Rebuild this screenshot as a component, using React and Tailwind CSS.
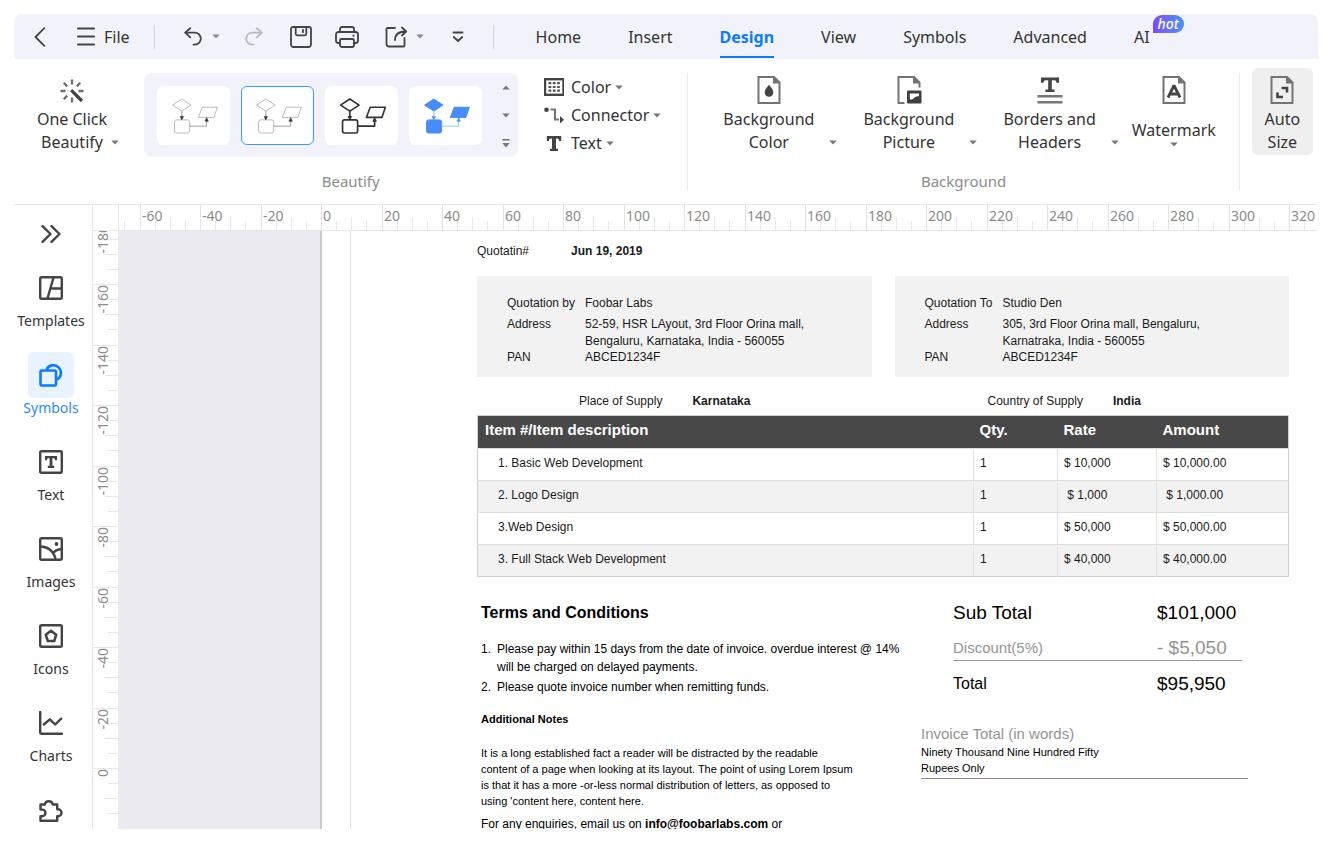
import React from "react";

const UI_FONT = "font-['Noto_Sans','Open_Sans',sans-serif]";
const DOC_FONT = "font-['Liberation_Sans',Arial,sans-serif]";

function Caret({ up = false, className = "fill-[#777777]" }) {
  return (
    <svg width="8" height="5" viewBox="0 0 8 5" className={"shrink-0 " + className} aria-hidden="true">
      <path d={up ? "M0.3 4.6h7.4L4 0.4z" : "M0.3 0.4h7.4L4 4.6z"} />
    </svg>
  );
}

/* ---------- top bar ---------- */

function TopIcon({ label, className = "", children }) {
  return (
    <button type="button" aria-label={label} className={"flex h-6 items-center justify-center " + className}>
      {children}
    </button>
  );
}

const stroke = { fill: "none", stroke: "#444444", strokeWidth: 1.8, strokeLinecap: "round", strokeLinejoin: "round" };

function UndoIcon({ color = "#444444", flip = false }) {
  return (
    <svg width="18" height="20" viewBox="0 0 18 20" {...stroke} stroke={color} aria-hidden="true">
      <g transform={flip ? "translate(18 0) scale(-1 1)" : undefined}>
        <path d="M6.2 1.2 1.2 5.600l5 4.800" />
        <path d="M1.6 5.600H10.800a6 6 0 0 1 0 12H9.500" />
      </g>
    </svg>
  );
}

const TABS = ["Home", "Insert", "Design", "View", "Symbols", "Advanced", "AI"];

function TopBar() {
  return (
    <header className="flex h-[45px] shrink-0 items-center rounded-t-lg bg-[#f2f3fa] text-[#333333]">
      <div className="flex items-center pl-5">
        <TopIcon label="Back" className="w-3">
          <svg width="12" height="20" viewBox="0 0 12 20" {...stroke} aria-hidden="true">
            <path d="M10.3 1.2 1.5 10l8.8 8.8" />
          </svg>
        </TopIcon>
        <button type="button" className="ml-[31px] flex items-center gap-[9px] text-base">
          <svg width="18" height="20" viewBox="0 0 18 20" {...stroke} aria-hidden="true">
            <path d="M.8 1.500h16.4M.8 9.500h16.4M.8 17.500h16.4" />
          </svg>
          File
        </button>
      </div>
      <div className="ml-6 h-6 w-px bg-[#d8d9df]" />
      <div className="ml-[29px] flex items-center">
        <TopIcon label="Undo" className="w-[18px]"><UndoIcon /></TopIcon>
        <TopIcon label="Undo history" className="ml-[10px] w-2"><Caret className="fill-[#8a8a8a]" /></TopIcon>
        <TopIcon label="Redo" className="ml-[25px] w-[18px]"><UndoIcon color="#b9b9bd" flip /></TopIcon>
        <TopIcon label="Save" className="ml-[27px] w-[22px]">
          <svg width="22" height="22" viewBox="0 0 22 22" {...stroke} aria-hidden="true">
            <path d="M3 1h16a2 2 0 0 1 2 2v15.5A2.5 2.5 0 0 1 18.500 21h-15A2.500 2.500 0 0 1 1 18.500V3a2 2 0 0 1 2-2z" />
            <path d="M5.700 1v6.800a1.500 1.500 0 0 0 1.500 1.500h7.600a1.500 1.500 0 0 0 1.500-1.500V1" />
            <path d="M13 3.800v2.400" />
          </svg>
        </TopIcon>
        <TopIcon label="Print" className="ml-[23px] w-6">
          <svg width="24" height="22" viewBox="0 0 24 22" {...stroke} aria-hidden="true">
            <path d="M5 6V3a2 2 0 0 1 2-2h10a2 2 0 0 1 2 2v3" />
            <path d="M5 17H3.500A2.500 2.500 0 0 1 1 14.500v-6A2.500 2.500 0 0 1 3.500 6h17A2.500 2.500 0 0 1 23 8.500v6a2.500 2.500 0 0 1-2.500 2.500H19" />
            <path d="M6.500 13h11a1.500 1.500 0 0 1 1.500 1.500v4.500a2 2 0 0 1-2 2H7a2 2 0 0 1-2-2v-4.500A1.500 1.500 0 0 1 6.500 13z" />
            <path d="M18.500 9.300v.6" />
          </svg>
        </TopIcon>
        <TopIcon label="Share" className="ml-[26px] w-[22px]">
          <svg width="22" height="22" viewBox="0 0 22 22" {...stroke} aria-hidden="true">
            <path d="M10 2H2.500a1 1 0 0 0-1 1V18A2.500 2.500 0 0 0 4 20.500h14.500a1 1 0 0 0 1-1V12" />
            <path d="M10 14C10 8.500 13 5.500 21 5.500M17 1.500l4.200 4L17 9.500" />
          </svg>
        </TopIcon>
        <TopIcon label="Share options" className="ml-[9px] w-2"><Caret className="fill-[#8a8a8a]" /></TopIcon>
        <TopIcon label="Customize toolbar" className="ml-7 w-3">
          <svg width="12" height="12" viewBox="0 0 12 12" {...stroke} aria-hidden="true">
            <path d="M1.500 1.500h9M1.800 6l4.200 4L10.200 6" />
          </svg>
        </TopIcon>
      </div>
      <div className="ml-[29px] h-6 w-px bg-[#d8d9df]" />
      <nav className="ml-[42px] flex h-full gap-[47px] text-base">
        {TABS.map((t) => {
          const active = t === "Design";
          return (
            <button
              key={t}
              type="button"
              className={
                "relative flex h-full items-center " +
                (active ? "font-bold text-[#0a7cff]" : "")
              }
            >
              {t}
              {active && <span className="absolute inset-x-0 bottom-px h-[2px] bg-[#0a7cff]" />}
              {t === "AI" && (
                <span className="absolute left-full top-px ml-[3px] rounded-[9px] rounded-bl-none bg-gradient-to-r from-[#7a48ff] to-[#4092f8] px-[5px] text-[14px] leading-[18px] font-medium text-white italic">
                  hot
                </span>
              )}
            </button>
          );
        })}
      </nav>
    </header>
  );
}

/* ---------- ribbon ---------- */

function FlowThumb({ color, shape = "none", arrow, line, width = 1 }) {
  return (
    <svg width="73" height="59" viewBox="0 0 73 59" fill={shape} stroke={color} strokeWidth={width} strokeLinejoin="round" aria-hidden="true">
      <path d="M24.500 12.500 34 18.800 24.500 25 15 18.800z" />
      <rect x="17" y="34" width="15.500" height="13.500" rx="2" />
      <path d="M45.500 21H61l-3.500 10.500H41.500z" />
      <path d="M24.500 25v7M32.500 40.500H50V33" fill="none" stroke={line} />
      <path d="M22.700 30.500h3.600l-1.800 3.600zM48.200 35.500h3.600L50 31.700z" fill={arrow} stroke={arrow} strokeWidth={width / 2} />
    </svg>
  );
}

const THUMBS = [
  { name: "Light style", color: "#b9b9b9", line: "#9a9a9a", arrow: "#333333" },
  { name: "Thin style", color: "#b9b9b9", line: "#9a9a9a", arrow: "#333333" },
  { name: "Bold style", color: "#333333", line: "#333333", arrow: "#333333", width: 1.7 },
  { name: "Filled style", color: "#478cf8", shape: "#478cf8", line: "#8ec4f5", arrow: "#478cf8" },
];

function PageOutline({ children, open = false }) {
  return (
    <svg width="26" height="28" viewBox="0 0 26 28" fill="none" stroke="#747474" strokeWidth="2" aria-hidden="true">
      {open ? (
        <path d="M8.500 27H2.500V1H18l5.500 5.500v5" />
      ) : (
        <path d="M2.500 1H18l5.500 5.500V27h-21z" />
      )}
      <path d="M17 0.500 24.500 7.500H17z" fill="#747474" stroke="none" />
      {children}
    </svg>
  );
}

function RibbonSplit({ icon, lines }) {
  return (
    <button type="button" className="flex flex-col items-center">
      {icon}
      <span className="mt-1 flex items-end">
        <span className="w-[23px]" />
        <span className="flex flex-col text-base leading-[23px]">
          <span>{lines[0]}</span>
          <span>{lines[1]}</span>
        </span>
        <span className="flex h-[23px] w-[23px] items-center justify-end"><Caret /></span>
      </span>
    </button>
  );
}

function GroupLabel({ children }) {
  return <div className="mt-3 text-center text-[15px] leading-6 text-[#8c8c8c]">{children}</div>;
}

function Divider() {
  return <div className="mt-[14px] h-[117px] w-px bg-[#ebebeb]" />;
}

function SmallMenu({ icon, label }) {
  return (
    <button type="button" className="flex h-7 items-center text-base">
      <span className="flex w-[20px] items-center justify-center">{icon}</span>
      <span className="ml-[7px]">{label}</span>
      <Caret className="ml-1 fill-[#777777]" />
    </button>
  );
}

function Ribbon() {
  return (
    <section className="flex h-[146px] shrink-0 overflow-hidden border-b border-[#e6e6ea] text-[#333333]">
      <div className="flex flex-col pt-[14px]">
        <div className="flex pr-6">
          <button type="button" className="flex w-[130px] flex-col items-center pr-[14px] pt-[6px]">
            <svg width="24" height="24" viewBox="0 0 24 24" fill="none" strokeLinecap="butt" aria-hidden="true">
              <path d="M12 .5v5M12 18.500v5M.5 12h5M18.500 12h5M3.800 3.800l3.400 3.600M20.200 3.800l-3.400 3.600M3.800 20.200l3.400-3.600" stroke="#707070" strokeWidth="2.400" />
              <path d="m11.200 11.200 10.800 10.800" stroke="#444444" strokeWidth="3.200" />
            </svg>
            <span className="mt-[5px] text-base leading-[23px]">One Click</span>
            <span className="flex items-center text-base leading-[23px]">
              <span className="w-4" />
              Beautify
              <span className="flex w-4 justify-end"><Caret /></span>
            </span>
          </button>
          <div className="flex h-[84px] items-center gap-[11px] rounded-lg bg-[#f2f3fa] pl-[13px]">
            {THUMBS.map((t, i) => (
              <button
                key={t.name}
                type="button"
                aria-label={t.name}
                className={
                  "flex h-[59px] w-[73px] items-center justify-center rounded-md border bg-white " +
                  (i === 1 ? "border-[#3d9bff]" : "border-white")
                }
              >
                <FlowThumb color={t.color} shape={t.shape} line={t.line} arrow={t.arrow} width={t.width} />
              </button>
            ))}
            <div className="flex h-full w-[25px] flex-col items-center">
              <button type="button" aria-label="Scroll up" className="flex h-7 items-center"><Caret up /></button>
              <button type="button" aria-label="Scroll down" className="flex h-7 items-center"><Caret /></button>
              <button type="button" aria-label="More styles" className="flex h-7 items-center">
                <svg width="8" height="9" viewBox="0 0 8 9" fill="#777777" aria-hidden="true">
                  <path d="M.3 0h7.400v1.500H.3zM.3 4h7.400L4 8.500z" />
                </svg>
              </button>
            </div>
          </div>
          <div className="ml-[26px] mr-[2px] flex flex-col items-start">
            <SmallMenu
              label="Color"
              icon={
                <svg width="20" height="18" viewBox="0 0 20 18" aria-hidden="true">
                  <rect x="1" y="1.200" width="18.500" height="15.600" fill="white" stroke="#444444" strokeWidth="2.400" />
                  <path d="M4.500 5.200h11.500M4.500 9h11.500M4.500 12.700h11.500" stroke="#555555" strokeWidth="2.200" strokeDasharray="2.800 1.500" />
                </svg>
              }
            />
            <SmallMenu
              label="Connector"
              icon={
                <svg width="20" height="17" viewBox="0 0 20 17" aria-hidden="true">
                  <circle cx="2.500" cy="2.800" r="2.300" fill="#444444" />
                  <path d="M6.500 2.500h4.500v10h4" fill="none" stroke="#777777" strokeWidth="2.200" />
                  <path d="m16 9 4 3.800L16 16.500z" fill="#444444" />
                </svg>
              }
            />
            <SmallMenu
              label="Text"
              icon={
                <svg width="16" height="15" viewBox="0 0 16 15" fill="#444444" aria-hidden="true">
                  <path d="M.8 0h14.400v5h-2.200c0-1.700-.6-2.400-2-2.400H10v10.200h2V15H4v-2.200h2V2.600H5C3.600 2.600 3 3.300 3 5H.8z" />
                </svg>
              }
            />
          </div>
        </div>
        <GroupLabel>Beautify</GroupLabel>
      </div>
      <Divider />
      <div className="flex flex-col pt-[14px]">
        <div className="flex h-[84px] items-start gap-[3px] pl-3 pr-[23px] pt-[3px]">
          <RibbonSplit
            lines={["Background", "Color"]}
            icon={
              <PageOutline>
                <path d="M13 8.800c2.600 3 4.300 5.300 4.300 7.700a4.300 4.300 0 0 1-8.600 0c0-2.400 1.700-4.700 4.300-7.700z" fill="#444444" stroke="none" />
              </PageOutline>
            }
          />
          <RibbonSplit
            lines={["Background", "Picture"]}
            icon={
              <PageOutline open>
                <rect x="11" y="14.500" width="14.500" height="13" rx="1" fill="#3f3f3f" stroke="none" />
                <path d="M13.800 17.500H23v2.800c-2.500 0-4 .5-5 1.800s-2.200 1.600-4.200 1.500z" fill="white" stroke="none" />
              </PageOutline>
            }
          />
          <RibbonSplit
            lines={["Borders and", "Headers"]}
            icon={
              <svg width="26" height="28" viewBox="0 0 26 28" aria-hidden="true">
                <path d="M4 1.500h18v5.300h-2.600c0-1.500-.6-2.500-1.800-2.500h-2.800v9.300h2.800V16H8.400v-2.400h2.800V4.300H8.400C7.200 4.300 6.600 5.300 6.600 6.800H4z" fill="#444444" />
                <path d="M.5 20.300h25M.5 26.300h25" stroke="#777777" strokeWidth="2.400" />
              </svg>
            }
          />
          <button type="button" className="ml-[10px] flex flex-col items-center text-base">
            <PageOutline>
              <path d="M7 21.500 13 9.500l6 12M9.500 18h7" stroke="#444444" strokeWidth="2.800" strokeLinejoin="bevel" />
            </PageOutline>
            <span className="mt-[15px] leading-[23px]">Watermark</span>
            <Caret />
          </button>
        </div>
        <GroupLabel>Background</GroupLabel>
      </div>
      <Divider />
      <div className="pl-3 pt-[9px]">
        <button type="button" className="flex h-[87px] w-[61px] flex-col items-center rounded-md bg-[#efefef] pt-2">
          <PageOutline>
            <path d="M12.500 12H18v4.500M8.500 16.500V21H14" stroke="#444444" strokeWidth="2.600" />
          </PageOutline>
          <span className="mt-1 text-base leading-[23px]">Auto</span>
          <span className="text-base leading-[23px]">Size</span>
        </button>
      </div>
    </section>
  );
}

/* ---------- sidebar ---------- */

const side = { width: 24, height: 24, viewBox: "0 0 24 24", fill: "none", stroke: "currentColor", strokeWidth: 2.4, strokeLinejoin: "round", "aria-hidden": true };

const SIDE_ITEMS = [
  {
    label: "Templates",
    icon: (
      <svg {...side}>
        <rect x="1.200" y="1.200" width="21.600" height="21.600" rx="1.500" />
        <path d="M14.500 1.500 8.500 22.500M12.500 12.500h10" />
      </svg>
    ),
  },
  {
    label: "Symbols",
    icon: (
      <svg {...side} strokeWidth="2.600">
        <rect x="1.500" y="7.500" width="15.500" height="15" rx="1.500" />
        <path d="M7.500 6.500A7.600 7.600 0 1 1 18 16.500" />
      </svg>
    ),
  },
  {
    label: "Text",
    icon: (
      <svg {...side}>
        <rect x="1.200" y="1.200" width="21.600" height="21.600" rx="1.500" />
        <path d="M6 6h12v4.200h-2c0-1.300-.4-1.900-1.400-1.900h-1.200v7.400h1.800V18H8.800v-2.300h1.800V8.300H9.400C8.400 8.300 8 8.900 8 10.200H6z" fill="currentColor" stroke="none" />
      </svg>
    ),
  },
  {
    label: "Images",
    icon: (
      <svg {...side}>
        <rect x="1.200" y="1.200" width="21.600" height="21.600" rx="1.500" />
        <path d="M1.500 9.500C8 9.500 14.500 13.500 16.500 22M13.500 17c2-3 5-4.700 9-4.700" />
        <circle cx="17.500" cy="7" r="1.900" fill="currentColor" stroke="none" />
      </svg>
    ),
  },
  {
    label: "Icons",
    icon: (
      <svg {...side}>
        <rect x="1.200" y="1.200" width="21.600" height="21.600" rx="1.500" />
        <path d="m12 6.800 5.200 4-2 6.200H8.800l-2-6.200z" strokeWidth="2.600" />
      </svg>
    ),
  },
  {
    label: "Charts",
    icon: (
      <svg {...side} strokeLinecap="round">
        <path d="M1.200 1v20.200a1.500 1.500 0 0 0 1.500 1.500H23" />
        <path d="m4.800 13.500 6-5.200 5.400 5.200 6-5.800" />
      </svg>
    ),
  },
  {
    name: "Plugins",
    icon: (
      <svg {...side}>
        <path d="M1.500 6.500h4.300a4.100 4.100 0 0 1 8 0h4.400v4.800h.8a3.500 3.500 0 0 1 0 7h-.8v4.500H1.500v-4.600h1.700a3.300 3.300 0 0 0 0-6.600H1.500z" />
      </svg>
    ),
  },
];

function Sidebar() {
  return (
    <aside className="flex w-[79px] shrink-0 flex-col items-center overflow-hidden border-r border-[#e6e6ea] pr-1 text-[#444444]">
      <button type="button" aria-label="Expand panel" className="mt-5 flex h-[18px] items-center">
        <svg width="20" height="18" viewBox="0 0 20 18" fill="none" stroke="#444444" strokeWidth="2.400" strokeLinecap="round" strokeLinejoin="round" aria-hidden="true">
          <path d="m1.500 1.200 8 7.800-8 7.800M10.500 1.200l8 7.800-8 7.800" />
        </svg>
      </button>
      <div className="mt-[22px] flex flex-col items-center gap-[21px]">
        {SIDE_ITEMS.map((it) => {
          const active = it.label === "Symbols";
          return (
            <button key={it.label || it.name} type="button" aria-label={it.name} className="flex flex-col items-center">
              <span className={"flex size-[46px] items-center justify-center rounded-md " + (active ? "bg-[#e9f3ff] text-[#0a7cff]" : "")}>
                {it.icon}
              </span>
              {it.label && (
                <span className={"text-sm leading-5 " + (active ? "text-[#2a8cff]" : "text-[#333333]")}>{it.label}</span>
              )}
            </button>
          );
        })}
      </div>
    </aside>
  );
}

/* ---------- rulers ---------- */

const STEP = 60.5;
const range = (from, to) => Array.from({ length: to - from + 1 }, (_, i) => from + i);

function HorizontalRuler() {
  const zero = 228;
  return (
    <svg className="block h-[26px] w-full border-b border-[#e6e6ea]" aria-hidden="true">
      <path d="M25.500 0v26" stroke="#e6e6ea" />
      {range(-13, 80).map((i) => {
        const x = Math.round(zero + (i * STEP) / 4) + 0.5;
        const major = i % 4 === 0;
        return <path key={i} d={`M${x} ${major ? 0 : i % 2 === 0 ? 12 : 16}V26`} stroke={major ? "#e2e2e8" : "#e6e6ea"} />;
      })}
      {range(-3, 16).map((i) => (
        <text key={i} x={Math.round(zero + i * STEP) + 2} y="16" fontSize="14" fill="#8c8c8c">
          {i * 20}
        </text>
      ))}
    </svg>
  );
}

function VerticalRuler() {
  const zero = 537;
  return (
    <svg className="block w-[25px] shrink-0 self-stretch" aria-hidden="true">
      {range(-36, 12).map((i) => {
        const y = Math.round(zero + (i * STEP) / 4) + 0.5;
        const x = i % 4 === 0 ? 0 : i % 2 === 0 ? 12 : 15;
        return <path key={i} d={`M${x} ${y}H25`} stroke="#e4e4ea" />;
      })}
      {range(-9, 0).map((i) => (
        <text key={i} transform={`translate(15 ${Math.round(zero + i * STEP) + 1}) rotate(-90)`} textAnchor="end" fontSize="14" fill="#8c8c8c">
          {i * 20}
        </text>
      ))}
    </svg>
  );
}

/* ---------- document ---------- */

function Party({ rows }) {
  return (
    <div className="bg-[#f2f2f2] pt-[19px] pr-4 pb-[13px] pl-[30px]">
      <dl className="grid grid-cols-[78px_1fr] whitespace-nowrap">
        <dt className="leading-4">{rows[0][0]}</dt>
        <dd className="leading-4">{rows[0][1]}</dd>
        <dt className="mt-[5px] leading-[17px]">{rows[1][0]}</dt>
        <dd className="mt-[5px] leading-[17px]">{rows[1][1]}<br />{rows[1][2]}</dd>
        <dt className="leading-[14px]">{rows[2][0]}</dt>
        <dd className="leading-[14px]">{rows[2][1]}</dd>
      </dl>
    </div>
  );
}

const ITEMS = [
  ["1. Basic Web Development", "1", "$ 10,000", "$ 10,000.00"],
  ["2. Logo Design", "1", " $ 1,000", " $ 1,000.00"],
  ["3.Web Design", "1", "$ 50,000", "$ 50,000.00"],
  ["3. Full Stack Web Development", "1", "$ 40,000", "$ 40,000.00"],
];

function ItemTable() {
  return (
    <table className="mt-[6px] w-full table-fixed border-collapse border border-[#cfcfcf] text-left">
      <colgroup>
        <col />
        <col className="w-[84px]" />
        <col className="w-[99px]" />
        <col className="w-[132px]" />
      </colgroup>
      <thead>
        <tr className="h-[33px] bg-[#484848] text-[15px] text-white">
          <th className="pb-[3px] pl-[7px]">Item #/Item description</th>
          <th className="pb-[3px] pl-[6px]">Qty.</th>
          <th className="pb-[3px] pl-[6px]">Rate</th>
          <th className="pb-[3px] pl-[6px]">Amount</th>
        </tr>
      </thead>
      <tbody>
        {ITEMS.map((r, i) => (
          <tr key={r[0]} className={"h-8 border-t border-[#dedede] " + (i % 2 ? "bg-[#f2f2f2]" : "bg-white")}>
            <td className="pb-[3px] pl-5">{r[0]}</td>
            <td className="border-l border-[#e2e2e2] pb-[3px] pl-[6px]">{r[1]}</td>
            <td className="border-l border-[#e2e2e2] pb-[3px] pl-[6px] whitespace-pre">{r[2]}</td>
            <td className="border-l border-[#e2e2e2] pb-[3px] pl-[6px] whitespace-pre">{r[3]}</td>
          </tr>
        ))}
      </tbody>
    </table>
  );
}

function Document() {
  return (
    <article className={"min-w-0 flex-1 overflow-hidden bg-white pt-3 pr-[29px] pl-[126px] text-[12px] text-[#1a1a1a] " + DOC_FONT}>
      <div className="flex gap-[42px] leading-4">
        <span>Quotatin#</span>
        <strong>Jun 19, 2019</strong>
      </div>

      <div className="mt-[17px] grid grid-cols-2 gap-[23px]">
        <Party
          rows={[
            ["Quotation by", "Foobar Labs"],
            ["Address", "52-59, HSR LAyout, 3rd Floor Orina mall,", "Bengaluru, Karnataka, India - 560055"],
            ["PAN", "ABCED1234F"],
          ]}
        />
        <Party
          rows={[
            ["Quotation To", "Studio Den"],
            ["Address", "305, 3rd Floor Orina mall, Bengaluru,", "Karnatraka, India - 560055"],
            ["PAN", "ABCED1234F"],
          ]}
        />
      </div>

      <div className="mt-4 grid grid-cols-2 gap-[23px] leading-4">
        <div className="flex gap-[30px] pl-[102px]">
          <span>Place of Supply</span>
          <strong>Karnataka</strong>
        </div>
        <div className="flex gap-[30px] pl-[93px]">
          <span>Country of Supply</span>
          <strong>India</strong>
        </div>
      </div>

      <ItemTable />

      <div className="grid grid-cols-[444px_1fr] text-black">
        <div className="pt-[26px] pl-1 whitespace-nowrap">
          <h2 className="text-base leading-5 font-bold">Terms and Conditions</h2>
          <ol className="mt-[17px] flex list-none flex-col gap-[2px] leading-[18px]">
            <li className="flex">
              <span className="w-4 shrink-0">1.</span>
              <span>
                Please pay within 15 days from the date of invoice. overdue interest @ 14%
                <br />
                will be charged on delayed payments.
              </span>
            </li>
            <li className="flex">
              <span className="w-4 shrink-0">2.</span>
              <span>Please quote invoice number when remitting funds.</span>
            </li>
          </ol>
          <h3 className="mt-[15px] text-[11px] leading-4 font-bold">Additional Notes</h3>
          <p className="mt-[18px] text-[11px] leading-4">
            It is a long established fact a reader will be distracted by the readable
            <br />
            content of a page when looking at its layout. The point of using Lorem Ipsum
            <br />
            is that it has a more -or-less normal distribution of letters, as opposed to
            <br />
            using 'content here, content here.
          </p>
          <p className="mt-[7px] leading-4">
            For any enquiries, email us on{" "}
            <a href="mailto:info@foobarlabs.com" className="font-bold">info@foobarlabs.com</a> or
          </p>
        </div>

        <div className="w-[327px] pt-6">
          <dl className="ml-8 mr-[6px] grid grid-cols-[204px_1fr] text-[19px] leading-6 whitespace-nowrap">
            <dt>Sub Total</dt>
            <dd>$101,000</dd>
            <dt className="mt-[11px] border-b border-[#999999] text-[15px] leading-6 text-[#949494]">Discount(5%)</dt>
            <dd className="mt-[11px] border-b border-[#999999] text-[#949494]">- $5,050</dd>
            <dt className="mt-[11px] text-[16px] leading-6">Total</dt>
            <dd className="mt-[11px]">$95,950</dd>
          </dl>
          <div className="mt-7 border-b border-[#8a8a8a] pb-[2px] text-[11px] leading-4">
            <div className="text-[15px] leading-5 text-[#949494]">Invoice Total (in words)</div>
            Ninety Thousand Nine Hundred Fifty
            <br />
            Rupees Only
          </div>
        </div>
      </div>
    </article>
  );
}

export default function App() {
  return (
    <main className={"flex h-screen flex-col overflow-hidden bg-white px-[14px] pt-[14px] pb-[15px] " + UI_FONT}>
      <TopBar />
      <Ribbon />
      <div className="flex min-h-0 flex-1">
        <Sidebar />
        <div className="flex min-w-0 flex-1 flex-col">
          <HorizontalRuler />
          <div className="flex min-h-0 flex-1">
            <VerticalRuler />
            <div className="w-[202px] shrink-0 bg-[#ebeaf0]" />
            <div className="w-[31px] shrink-0 border-r border-l-2 border-r-[#e0e0e0] border-l-[#cdcdcd] bg-white" />
            <Document />
          </div>
        </div>
      </div>
    </main>
  );
}
